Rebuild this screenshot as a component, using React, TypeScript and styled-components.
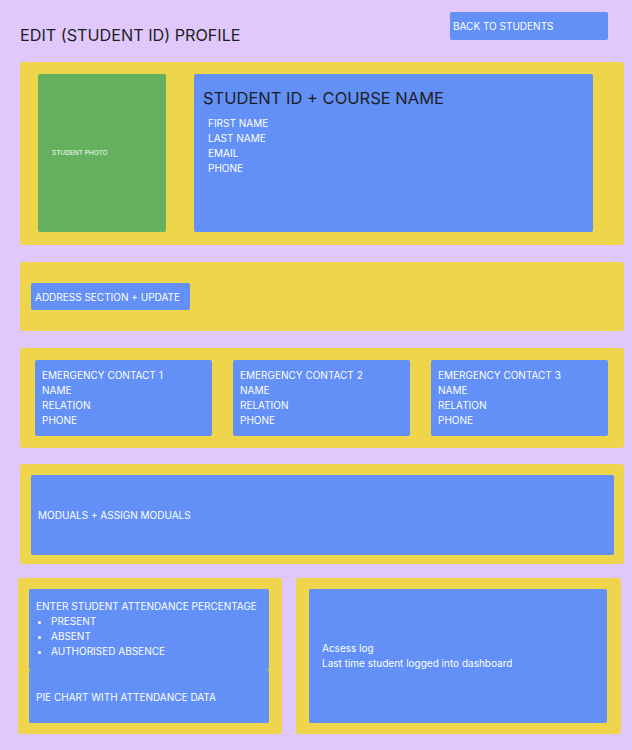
import React from 'react';
import styled, { createGlobalStyle } from 'styled-components';

const GlobalStyle = createGlobalStyle`
  body {
    margin: 0;
    background: #e0c8fd;
    font-family: Inter, 'Noto Sans', sans-serif;
  }
`;

const yellow = '#efd54b';
const blue = '#6290f7';

const App: React.FC = () => {
  const contacts = [1, 2, 3];
  return (
    <>
      <GlobalStyle />
      <Page>
        <Header>
          <PageTitle>EDIT (STUDENT ID) PROFILE</PageTitle>
          <BackButton>BACK TO STUDENTS</BackButton>
        </Header>

        <ProfileSection>
          <Photo>STUDENT PHOTO</Photo>
          <Details>
            <DetailsTitle>STUDENT ID + COURSE NAME</DetailsTitle>
            <FieldList>
              <Line>FIRST NAME</Line>
              <Line>LAST NAME</Line>
              <Line>EMAIL</Line>
              <Line>PHONE</Line>
            </FieldList>
          </Details>
        </ProfileSection>

        <AddressSection>
          <AddressButton>ADDRESS SECTION + UPDATE</AddressButton>
        </AddressSection>

        <ContactSection>
          {contacts.map((n) => (
            <ContactCard key={n}>
              <Line>EMERGENCY CONTACT {n}</Line>
              <Line>NAME</Line>
              <Line>RELATION</Line>
              <Line>PHONE</Line>
            </ContactCard>
          ))}
        </ContactSection>

        <ModuleSection>
          <ModuleBox>MODUALS + ASSIGN MODUALS</ModuleBox>
        </ModuleSection>

        <BottomRow>
          <AttendancePanel>
            <AttendanceBox>
              <Line>ENTER STUDENT ATTENDANCE PERCENTAGE</Line>
              <Bullets>
                <li>PRESENT</li>
                <li>ABSENT</li>
                <li>AUTHORISED ABSENCE</li>
              </Bullets>
            </AttendanceBox>
            <ChartBox>PIE CHART WITH ATTENDANCE DATA</ChartBox>
          </AttendancePanel>
          <LogPanel>
            <LogBox>
              <Line>Acsess log</Line>
              <Line>Last time student logged into dashboard</Line>
            </LogBox>
          </LogPanel>
        </BottomRow>
      </Page>
    </>
  );
};

const Page = styled.div`
  display: flex;
  flex-direction: column;
  padding: 12px 8px 16px 20px;
`;
const Header = styled.div`
  display: flex;
  justify-content: space-between;
  align-items: flex-start;
  padding-right: 16px;
  height: 50px;
`;
const PageTitle = styled.h1`
  margin: 14px 0 0;
  font-size: 16.2px;
  font-weight: 400;
  color: #1e1e1e;
  line-height: 18px;
`;
const BackButton = styled.div`
  width: 155px;
  height: 28px;
  display: flex;
  align-items: center;
  padding-left: 3px;
  background: ${blue};
  border-radius: 2px;
  color: #fff;
  font-size: 10px;
`;
const Section = styled.div`
  background: ${yellow};
  border-radius: 3px;
  display: flex;
  box-sizing: border-box;
`;
const ProfileSection = styled(Section)`
  height: 183px;
  padding: 12px 31px 13px 18px;
  gap: 28px;
`;
const Photo = styled.div`
  width: 128px;
  background: #65b05f;
  border-radius: 2px;
  display: flex;
  align-items: center;
  padding-left: 14px;
  box-sizing: border-box;
  color: #fff;
  font-size: 6.5px;
`;
const Details = styled.div`
  flex: 1;
  background: ${blue};
  border-radius: 2px;
  padding: 14px 9px;
`;
const DetailsTitle = styled.div`
  font-size: 16.5px;
  color: #1e1e1e;
  line-height: 20px;
`;
const FieldList = styled.div`
  margin-top: 8px;
  padding-left: 5px;
`;
const Line = styled.div`
  color: #fff;
  font-size: 10px;
  line-height: 15px;
`;
const AddressSection = styled(Section)`
  margin-top: 17px;
  height: 69px;
  align-items: center;
  padding-left: 11px;
`;
const AddressButton = styled.div`
  width: 159px;
  height: 27px;
  background: ${blue};
  border-radius: 2px;
  display: flex;
  align-items: center;
  padding-left: 4px;
  box-sizing: border-box;
  color: #fff;
  font-size: 10px;
`;
const ContactSection = styled(Section)`
  margin-top: 17px;
  height: 100px;
  padding: 12px 16px 12px 15px;
  gap: 21px;
`;
const ContactCard = styled.div`
  flex: 1;
  background: ${blue};
  border-radius: 2px;
  padding: 8px 7px;
`;
const ModuleSection = styled(Section)`
  margin-top: 16px;
  height: 100px;
  padding: 11px 10px 9px 11px;
`;
const ModuleBox = styled.div`
  flex: 1;
  background: ${blue};
  border-radius: 2px;
  display: flex;
  align-items: center;
  padding-left: 7px;
  color: #fff;
  font-size: 10px;
`;
const BottomRow = styled.div`
  display: flex;
  gap: 14px;
  margin: 14px 0 0 -2px;
`;
const AttendancePanel = styled(Section)`
  width: 264px;
  height: 156px;
  flex-direction: column;
  padding: 11px 13px 11px 11px;
`;
const AttendanceBox = styled.div`
  height: 81px;
  background: ${blue};
  border-radius: 2px;
  padding: 10px 7px;
  box-sizing: border-box;
`;
const Bullets = styled.ul`
  margin: 0;
  padding-left: 15px;
  color: #fff;
  font-size: 10px;
  line-height: 15px;
`;
const ChartBox = styled.div`
  flex: 1;
  background: ${blue};
  border-radius: 2px;
  display: flex;
  align-items: center;
  padding-left: 7px;
  color: #fff;
  font-size: 10px;
`;
const LogPanel = styled(Section)`
  width: 325px;
  height: 156px;
  padding: 11px 14px 11px 13px;
`;
const LogBox = styled.div`
  flex: 1;
  background: ${blue};
  border-radius: 2px;
  display: flex;
  flex-direction: column;
  justify-content: center;
  padding-left: 13px;
`;

export default App;
